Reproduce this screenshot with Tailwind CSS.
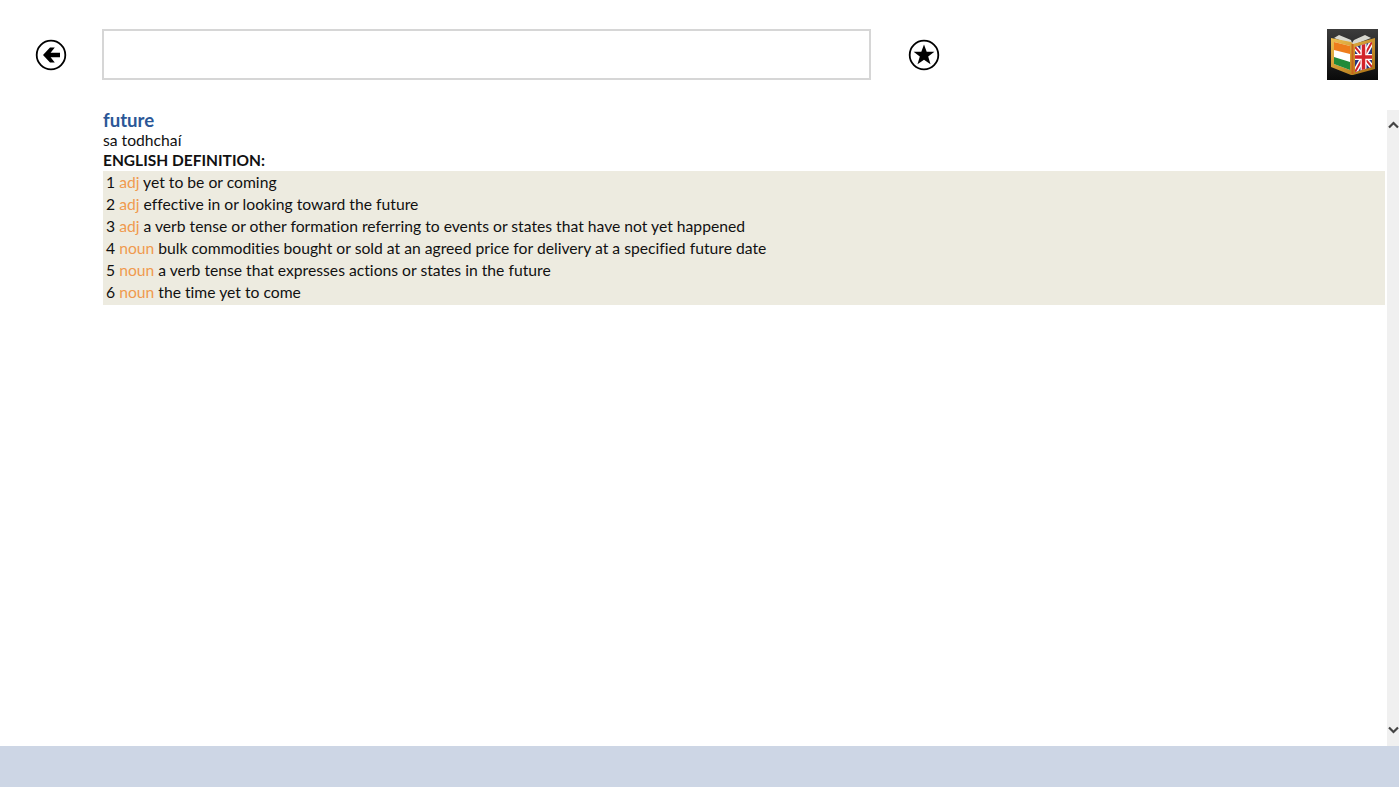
<!DOCTYPE html>
<html>
<head>
  <title>Dictionary</title>
  <script src="https://cdn.jsdelivr.net/npm/@tailwindcss/browser@4"></script>
</head>
<body class="w-[1399px] h-[787px] overflow-hidden bg-white flex flex-col font-['Lato',sans-serif] [font-variant-ligatures:none] text-[#111]">
  <!-- Top bar -->
  <div class="h-[110px] flex items-start pt-[29px]">
    <div class="w-[102px] h-[51px] flex items-center justify-center">
      <svg width="32" height="32" viewBox="0 0 32 32" fill="none">
        <circle cx="16" cy="16" r="14.3" stroke="#000" stroke-width="1.8"/>
        <path d="M25 13.8H15.6L19.8 8.6H15L8 16L15 23.4H19.8L15.6 18.2H25Z" fill="#000"/>
      </svg>
    </div>
    <input type="text" class="w-[769px] h-[51px] border-2 border-[#d6d6d6] bg-white outline-none">
    <div class="w-[106px] h-[51px] flex items-center justify-center">
      <svg width="32" height="32" viewBox="0 0 32 32" fill="none">
        <circle cx="16" cy="16" r="14.3" stroke="#000" stroke-width="1.8"/>
        <path d="M16 5.5L18.7 12.8H26.4L20.2 17.6L22.5 25.2L16 20.7L9.5 25.2L11.8 17.6L5.6 12.8H13.3Z" fill="#000"/>
      </svg>
    </div>
    <div class="ml-[350px] w-[51px] h-[51px]">
      <!-- app logo -->
      <svg width="51" height="51" viewBox="0 0 51 51">
        <defs>
          <linearGradient id="bg" x1="0" y1="0" x2="0" y2="1">
            <stop offset="0" stop-color="#3c3c3c"/>
            <stop offset="1" stop-color="#0a0a0a"/>
          </linearGradient>
          <linearGradient id="gold" x1="0" y1="0" x2="1" y2="1">
            <stop offset="0" stop-color="#f0c050"/>
            <stop offset="1" stop-color="#a86c10"/>
          </linearGradient>
          <clipPath id="uk"><path d="M28 18L45 13V38L28 43Z"/></clipPath>
        </defs>
        <rect width="51" height="51" fill="url(#bg)"/>
        <path d="M7 9L12 6L24 11L25 14L27 11L38 6L44 9L26 16Z" fill="#d8d8d0"/>
        <path d="M4 9L24 13L26 15L48 9V40L26 46L24 46L4 38Z" fill="url(#gold)"/>
        <path d="M7 13L23 17V41L7 35Z" fill="#fff"/>
        <path d="M7 13L23 17V25L7 21Z" fill="#ee7d1c"/>
        <path d="M7 28L23 33V41L7 35Z" fill="#1f8a3a"/>
        <rect x="24.5" y="15" width="2" height="30" fill="#c8641a"/>
        <g clip-path="url(#uk)">
          <rect x="28" y="12" width="18" height="32" fill="#27357f"/>
          <path d="M28 18L45 38M45 13L28 43" stroke="#fff" stroke-width="5"/>
          <path d="M28 18L45 38M45 13L28 43" stroke="#d2232a" stroke-width="2"/>
          <path d="M36.5 9V44M28 28H46" stroke="#fff" stroke-width="6"/>
          <path d="M36.5 9V44M28 28H46" stroke="#d2232a" stroke-width="3.5"/>
        </g>
      </svg>
    </div>
  </div>

  <!-- Content with scrollbar -->
  <div class="flex-1 flex min-h-0">
    <div class="flex-1 pl-[103px] pr-[2px] text-[15.7px] leading-[20px]">
      <div class="text-[18.6px] leading-[20px] font-bold text-[#2b5797]">future</div>
      <div>sa todhchaí</div>
      <div class="text-[15.5px] font-bold leading-[21px]">ENGLISH DEFINITION:</div>
      <div class="bg-[#edebe0] pl-[3px] pb-[2px] leading-[22px]">
        <div>1 <span class="text-[#f09a4e]">adj</span> yet to be or coming</div>
        <div>2 <span class="text-[#f09a4e]">adj</span> effective in or looking toward the future</div>
        <div>3 <span class="text-[#f09a4e]">adj</span> a verb tense or other formation referring to events or states that have not yet happened</div>
        <div>4 <span class="text-[#f09a4e]">noun</span> bulk commodities bought or sold at an agreed price for delivery at a specified future date</div>
        <div>5 <span class="text-[#f09a4e]">noun</span> a verb tense that expresses actions or states in the future</div>
        <div>6 <span class="text-[#f09a4e]">noun</span> the time yet to come</div>
      </div>
    </div>
    <div class="w-[12px] bg-[#f0f0f0] flex flex-col justify-between items-center pt-[11px] pb-[12px]">
      <svg width="11" height="8" viewBox="0 0 11 8" fill="none"><path d="M1 6.5L5.5 2L10 6.5" stroke="#444" stroke-width="2.2"/></svg>
      <svg width="11" height="8" viewBox="0 0 11 8" fill="none"><path d="M1 1.5L5.5 6L10 1.5" stroke="#444" stroke-width="2.2"/></svg>
    </div>
  </div>

  <!-- Bottom bar -->
  <div class="h-[41px] bg-[#cdd6e5]"></div>
</body>
</html>
